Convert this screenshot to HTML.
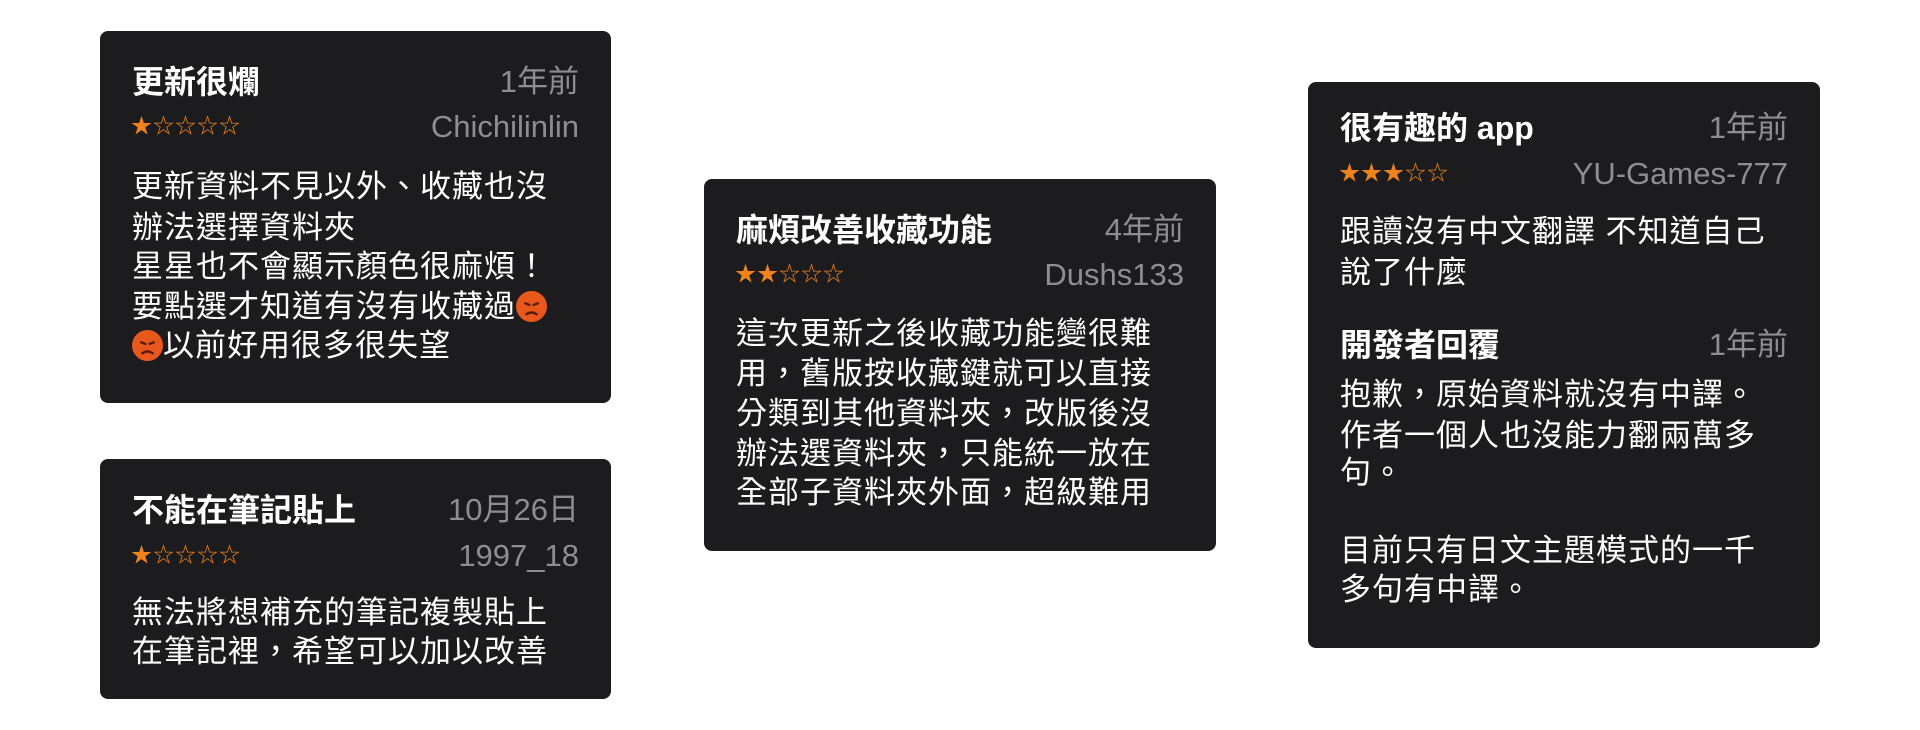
<!DOCTYPE html>
<html><head><meta charset="utf-8"><style>
html,body{margin:0;padding:0;background:#fff;width:1920px;height:730px;overflow:hidden}
body{position:relative;font-family:"Liberation Sans","Noto Sans CJK TC",sans-serif}
.card{position:absolute;background:#1c1c1e;border-radius:8px}
.t{position:absolute;line-height:40px;height:40px;white-space:nowrap}
.ti{color:#fff;font-weight:bold;font-size:32px}
.g{color:#8d8d92;font-size:31px;text-align:right}
.b{color:#fff;font-size:31px;letter-spacing:1px}
.s{color:#f0821e;font-size:21px;letter-spacing:1px}
.e{display:inline-block;width:31px;height:31px;vertical-align:-5px}
</style></head><body>
<div class="card" style="left:100px;top:31px;width:511px;height:372px"></div>
<div class="card" style="left:100px;top:459px;width:511px;height:240px"></div>
<div class="card" style="left:704px;top:179px;width:512px;height:372px"></div>
<div class="card" style="left:1308px;top:82px;width:512px;height:566px"></div>

<!-- card1 -->
<div class="t ti" style="left:132px;top:62px">更新很爛</div>
<div class="t g" style="right:1341px;top:62px">1年前</div>
<div class="t s" style="left:131px;top:107px">★☆☆☆☆</div>
<div class="t g" style="right:1341px;top:107px">Chichilinlin</div>
<div class="t b" style="left:132px;top:167px">更新資料不見以外、收藏也沒</div>
<div class="t b" style="left:132px;top:208px">辦法選擇資料夾</div>
<div class="t b" style="left:132px;top:247px">星星也不會顯示顏色很麻煩！</div>
<div class="t b" style="left:132px;top:287px">要點選才知道有沒有收藏過<svg class="e" viewBox="0 0 26 26"><circle cx="13" cy="13" r="13" fill="#e8581c"/><path d="M7 10l5 2M19 10l-5 2" stroke="#5a1a08" stroke-width="2"/><path d="M8 20q5-4 10 0" stroke="#5a1a08" stroke-width="2" fill="none"/></svg></div>
<div class="t b" style="left:132px;top:326px"><svg class="e" viewBox="0 0 26 26"><circle cx="13" cy="13" r="13" fill="#e8581c"/><path d="M7 10l5 2M19 10l-5 2" stroke="#5a1a08" stroke-width="2"/><path d="M8 20q5-4 10 0" stroke="#5a1a08" stroke-width="2" fill="none"/></svg>以前好用很多很失望</div>

<!-- card2 -->
<div class="t ti" style="left:132px;top:490px">不能在筆記貼上</div>
<div class="t g" style="right:1341px;top:490px">10月26日</div>
<div class="t s" style="left:131px;top:536px">★☆☆☆☆</div>
<div class="t g" style="right:1341px;top:536px">1997_18</div>
<div class="t b" style="left:132px;top:593px">無法將想補充的筆記複製貼上</div>
<div class="t b" style="left:132px;top:632px">在筆記裡，希望可以加以改善</div>

<!-- card3 -->
<div class="t ti" style="left:736px;top:210px">麻煩改善收藏功能</div>
<div class="t g" style="right:736px;top:210px">4年前</div>
<div class="t s" style="left:735px;top:255px">★★☆☆☆</div>
<div class="t g" style="right:736px;top:255px">Dushs133</div>
<div class="t b" style="left:736px;top:314px">這次更新之後收藏功能變很難</div>
<div class="t b" style="left:736px;top:354px">用，舊版按收藏鍵就可以直接</div>
<div class="t b" style="left:736px;top:394px">分類到其他資料夾，改版後沒</div>
<div class="t b" style="left:736px;top:434px">辦法選資料夾，只能統一放在</div>
<div class="t b" style="left:736px;top:473px">全部子資料夾外面，超級難用</div>

<!-- card4 -->
<div class="t ti" style="left:1340px;top:108px">很有趣的 app</div>
<div class="t g" style="right:132px;top:108px">1年前</div>
<div class="t s" style="left:1339px;top:154px">★★★☆☆</div>
<div class="t g" style="right:132px;top:154px">YU-Games-777</div>
<div class="t b" style="left:1340px;top:212px">跟讀沒有中文翻譯 不知道自己</div>
<div class="t b" style="left:1340px;top:253px">說了什麼</div>
<div class="t ti" style="left:1340px;top:325px">開發者回覆</div>
<div class="t g" style="right:132px;top:325px">1年前</div>
<div class="t b" style="left:1340px;top:375px">抱歉，原始資料就沒有中譯。</div>
<div class="t b" style="left:1340px;top:416px">作者一個人也沒能力翻兩萬多</div>
<div class="t b" style="left:1340px;top:453px">句。</div>
<div class="t b" style="left:1340px;top:531px">目前只有日文主題模式的一千</div>
<div class="t b" style="left:1340px;top:570px">多句有中譯。</div>
</body></html>
